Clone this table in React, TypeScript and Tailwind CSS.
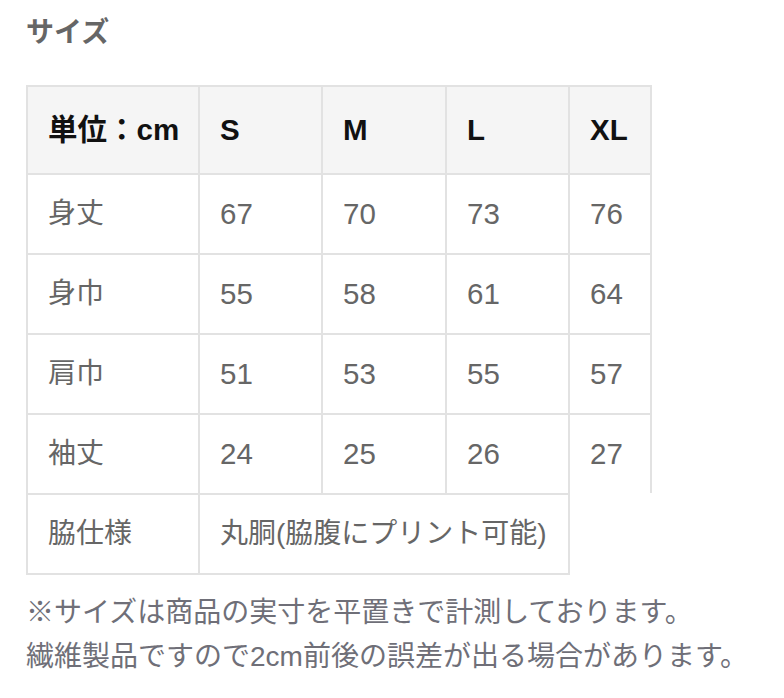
const font = { fontFamily: '"Liberation Sans", "Noto Sans CJK JP", sans-serif' }

const sizes = ["S", "M", "L", "XL"]

const rows = [
  { label: "身丈", values: ["67", "70", "73", "76"] },
  { label: "身巾", values: ["55", "58", "61", "64"] },
  { label: "肩巾", values: ["51", "53", "55", "57"] },
  { label: "袖丈", values: ["24", "25", "26", "27"] },
]

export default function App() {
  return (
    <div className="min-h-[698px] bg-white px-[26px] pt-[15px]" style={font}>
      <h2 className="h-[36px] text-[28px] font-bold leading-[36px] text-[#666]">サイズ</h2>

      <div className="mt-[34px] grid w-fit grid-cols-[172px_123px_124px_123px_84px] text-[29.5px] text-[#666]">
        {/* header */}
        <div className="flex h-[88px] items-center border-t-2 border-l-2 border-[#e2e2e2] bg-[#f5f5f5] pl-5 font-bold text-[#111]">
          単位：cm
        </div>
        {sizes.map((s, i) => (
          <div
            key={s}
            className={
              "flex h-[88px] items-center border-t-2 border-l-2 border-[#e2e2e2] bg-[#f5f5f5] pl-5 font-bold text-[#111]" +
              (i === sizes.length - 1 ? " border-r-2" : "")
            }
          >
            {s}
          </div>
        ))}

        {rows.map((r) => (
          <div key={r.label} className="contents">
            <div className="flex h-[80px] items-center border-t-2 border-l-2 border-[#e2e2e2] pl-5 text-[28px]">
              {r.label}
            </div>
            {r.values.map((v, i) => (
              <div
                key={i}
                className={
                  "flex h-[80px] items-center border-t-2 border-l-2 border-[#e2e2e2] pl-5" +
                  (i === r.values.length - 1 ? " border-r-2" : "")
                }
              >
                {v}
              </div>
            ))}
          </div>
        ))}

        {/* last row, XL column left empty */}
        <div className="flex h-[82px] items-center border-t-2 border-l-2 border-b-2 border-[#e2e2e2] pl-5 text-[28px]">
          脇仕様
        </div>
        <div className="col-span-3 -mr-[2px] flex h-[82px] items-center border-2 border-[#e2e2e2] pl-5 text-[28px]">
          丸胴(脇腹にプリント可能)
        </div>
      </div>

      <div className="mt-[16px] text-[28px] leading-[44px] text-[#6f6f78]">
        <p>※サイズは商品の実寸を平置きで計測しております。</p>
        <p>繊維製品ですので2cm前後の誤差が出る場合があります。</p>
      </div>
    </div>
  )
}
